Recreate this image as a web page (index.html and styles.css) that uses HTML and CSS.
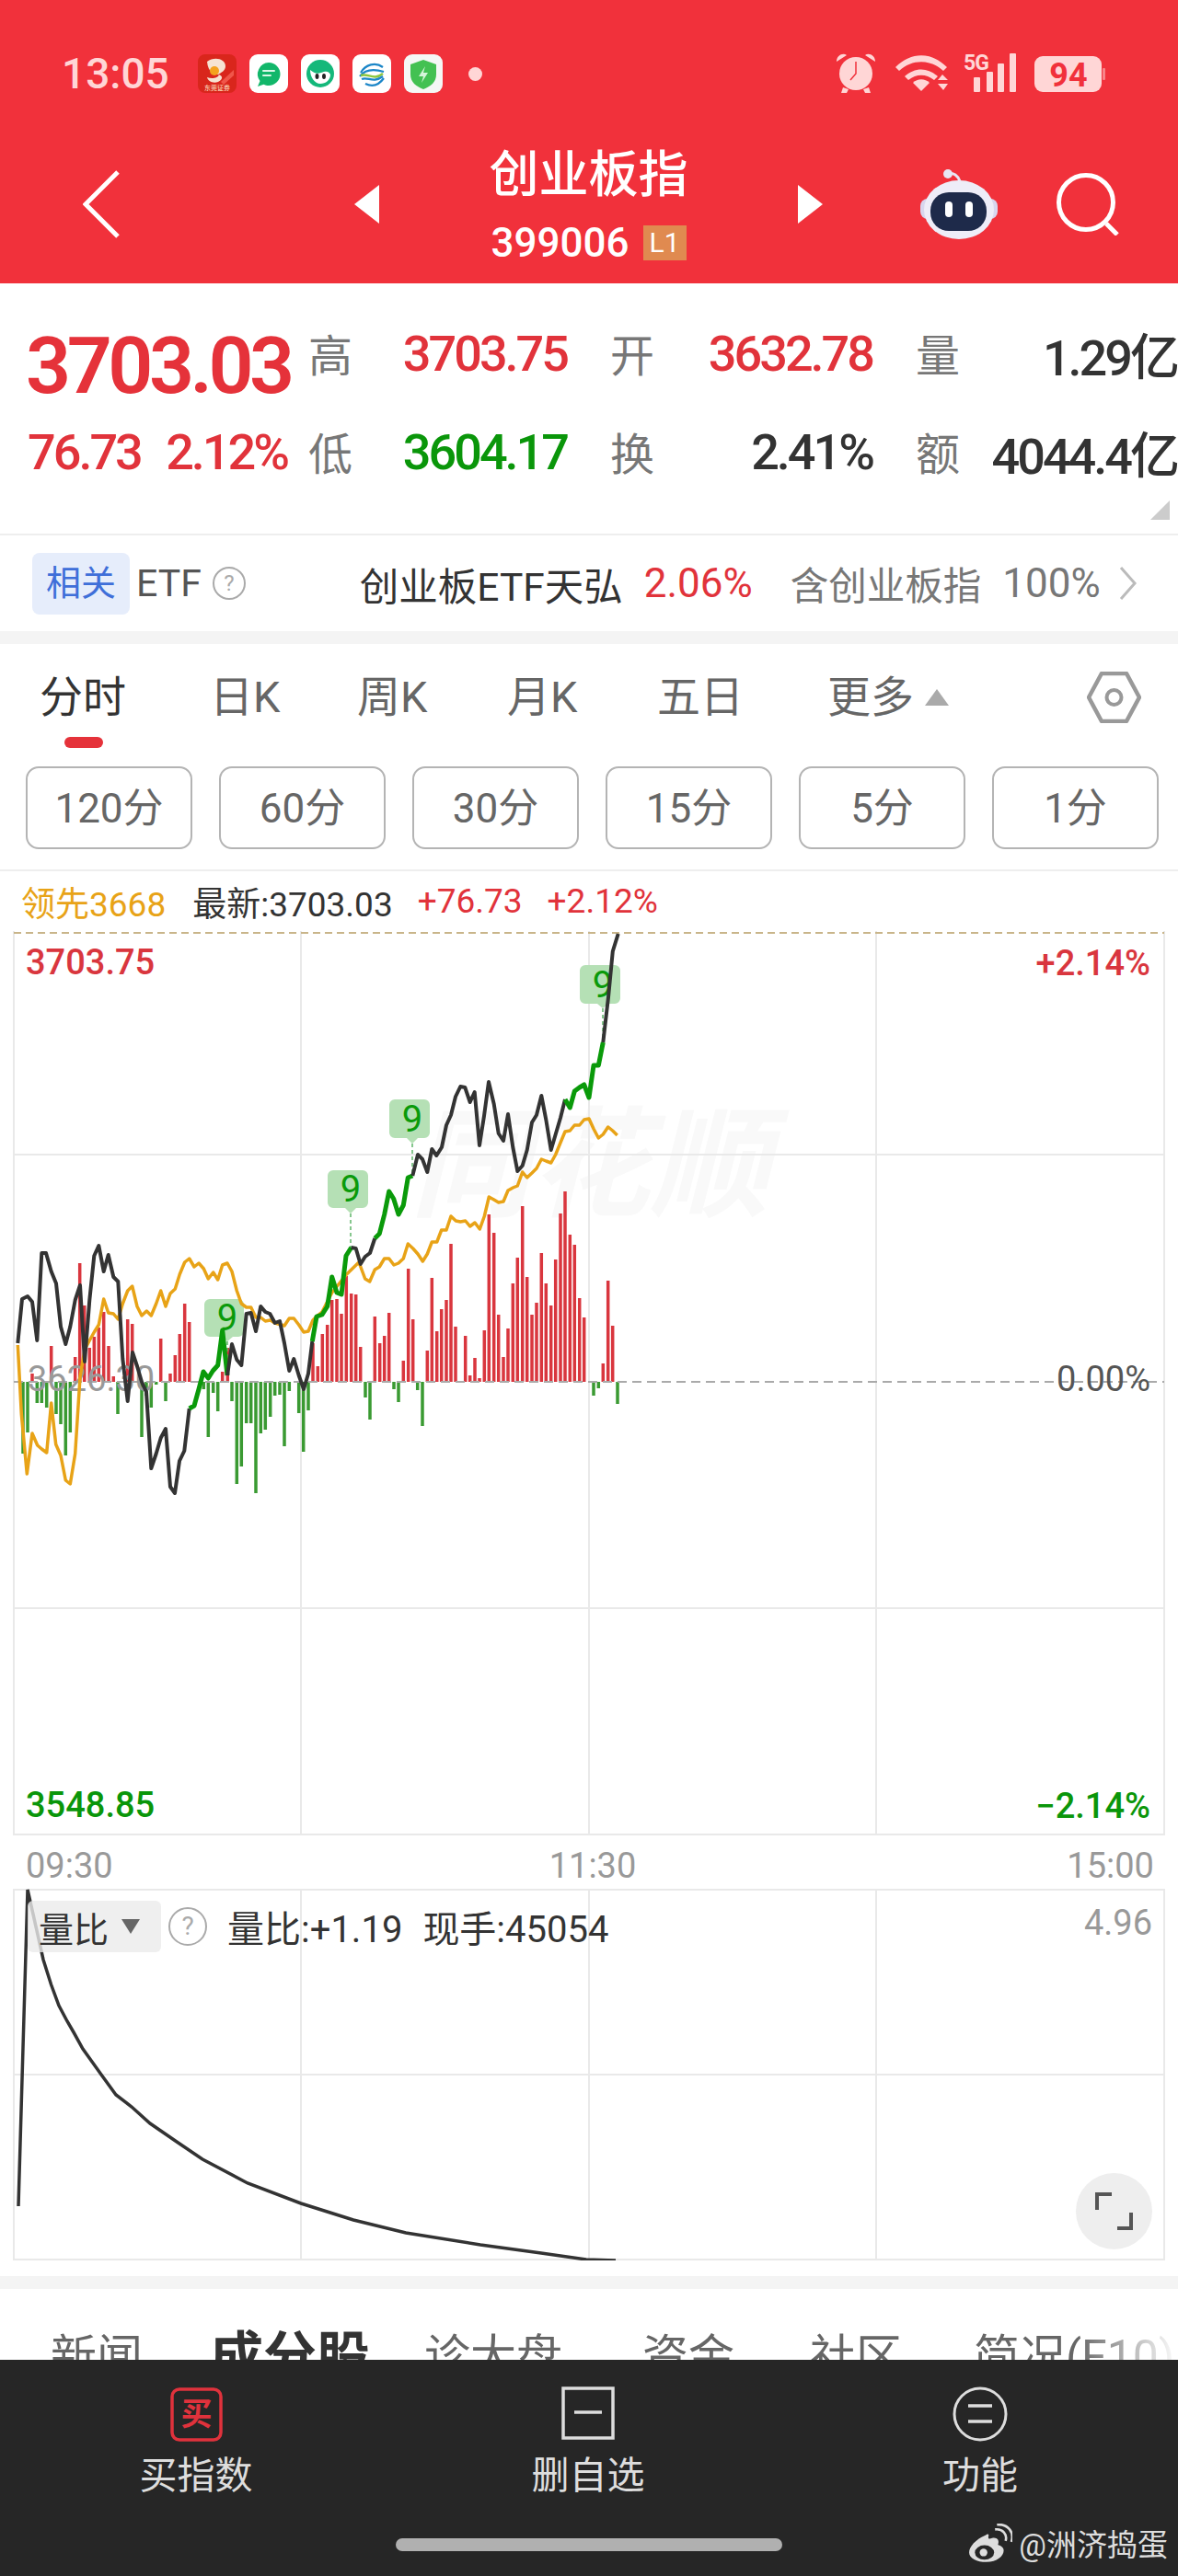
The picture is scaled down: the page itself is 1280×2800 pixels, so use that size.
FILE: index.html
```html
<!DOCTYPE html>
<html lang="zh-CN">
<head>
  <meta charset="UTF-8">
  <meta name="viewport" content="width=device-width, initial-scale=1.0">
  <title>创业板指 399006</title>
  <link rel="stylesheet" href="styles.css">
</head>
<body>
  <header class="top">
    <div class="status">
      <span class="clock">13:05</span>
      <div class="app-icons">
        <svg class="app-icon" viewBox="0 0 42 42"><rect width="42" height="42" rx="8" fill="#d9261c"/><path d="M10 8c8-6 20-3 20 5 0 5-5 7-8 9 6 1 5 6 0 8-6 2-11-1-12-5 5 2 12 1 13-3-5 0-12-2-13-14z" fill="#f6e3d2"/><circle cx="18" cy="18" r="5" fill="#f4a21e"/><path d="M25 30l14-13v6L28 33z" fill="#f0564a"/><text class="app-icon-text" x="21" y="39">东莞证券</text></svg>
        <svg class="app-icon" viewBox="0 0 42 42"><rect width="42" height="42" rx="9" fill="#fff"/><path d="M21 9a12.500 12.500 0 0 1 0 25c-2 0-4-.5-5.500-1.300L9 35l2.500-6A12.500 12.500 0 0 1 21 9z" fill="#12b76a"/><path d="M15 18h12M15 23h8" stroke="#d9f7e7" stroke-width="2" stroke-linecap="round"/></svg>
        <svg class="app-icon" viewBox="0 0 42 42"><rect width="42" height="42" rx="9" fill="#fff"/><circle cx="21" cy="21" r="15" fill="#14b87a"/><path d="M10 17c4 3 7 5 12 3s8-2 10 2c0 6-5 10-11 10-6 0-11-7-11-15z" fill="#fff"/><ellipse cx="17.500" cy="24" rx="2" ry="3" fill="#222"/><ellipse cx="25" cy="24" rx="2" ry="3" fill="#222"/></svg>
        <svg class="app-icon" viewBox="0 0 42 42"><rect width="42" height="42" rx="9" fill="#fff"/><path d="M9 20c5-9 16-12 24-6M8 24c6-8 16-8 26-5" fill="none" stroke="#1c86c8" stroke-width="2.200"/><path d="M9 23c8-3 14 6 24-2" fill="none" stroke="#8cc63f" stroke-width="2.500"/><path d="M10 27c7-3 12 5 23-3M14 32c8 4 15 1 20-6" fill="none" stroke="#1c86c8" stroke-width="2.200"/></svg>
        <svg class="app-icon" viewBox="0 0 42 42"><rect width="42" height="42" rx="9" fill="#f5f7f5"/><path d="M21 6l14 5v11c0 8-6 13-14 16-8-3-14-8-14-16V11z" fill="#43c152"/><path d="M23 13l-7 11h5l-2 7 7-11h-5z" fill="#d5f5d9"/></svg>
        <span class="status-dot"></span>
      </div>
      <svg class="status-right" viewBox="908 58 294 46">
        <g fill="#ffd6d6">
          <circle cx="930" cy="81" r="18"/>
          <path d="M909 68c0-7 7-10 11-7zM951 68c0-7-7-10-11-7z"/>
          <path d="M916 96l-2 6h6l2-4zM944 96l2 6h-6l-2-4z"/>
          <path d="M973 74c17-17 39-17 56 0l-4 4c-14-13-34-13-48 0z"/>
          <path d="M983 84c11-10 25-10 36 0l-4 4c-9-7-19-7-28 0z"/>
          <path d="M1001 100l-9-9c5-5 13-5 18 0z"/>
          <path d="M1019 88l5-6 6 6zM1019 92h11l-5 7z"/>
          <rect x="1058" y="85" width="7" height="16" rx="1"/>
          <rect x="1072" y="79" width="7" height="22" rx="1"/>
          <rect x="1084" y="70" width="7" height="31" rx="1"/>
          <rect x="1097" y="59" width="7" height="42" rx="1"/>
          <rect x="1124" y="62" width="73" height="39" rx="9"/>
          <rect x="1198" y="75" width="3" height="13" rx="1" opacity=".5"/>
        </g>
        <text class="status-5g" x="1047" y="77">5G</text>
        <text class="status-batt" x="1161" y="95">94</text>
        <path d="M930 68v13l-6 7" fill="none" stroke="#f1313b" stroke-width="1.500"/>
      </svg>
    </div>
    <nav class="nav">
      <svg class="nav-back" viewBox="0 0 40 74"><path d="M38 2L3 37l35 35" fill="none" stroke="#fff" stroke-width="5"/></svg>
      <span class="arrow arrow-left"></span>
      <div class="title">
        <div class="title-name">创业板指</div>
        <div class="title-code">399006<span class="badge-l1">L1</span></div>
      </div>
      <span class="arrow arrow-right"></span>
      <svg class="robot" viewBox="0 0 84 76">
        <path d="M30 5c6-2 11 2 13 8" fill="none" stroke="#e8e6f4" stroke-width="3"/>
        <circle cx="30" cy="5" r="5" fill="#e8e6f4"/>
        <rect x="0" y="32" width="84" height="22" rx="8" fill="#d8d6ee"/>
        <ellipse cx="42" cy="44" rx="38" ry="32" fill="#eeedf8"/>
        <rect x="11" y="25" width="61" height="42" rx="20" fill="#1e2a4a"/>
        <rect x="27" y="35" width="8" height="17" rx="4" fill="#fff"/>
        <rect x="49" y="35" width="8" height="17" rx="4" fill="#fff"/>
      </svg>
      <svg class="search" viewBox="0 0 68 68"><circle cx="32" cy="32" r="29.500" fill="none" stroke="#fff" stroke-width="5"/><path d="M54 55l12 12" stroke="#fff" stroke-width="5"/></svg>
    </nav>
  </header>

  <section class="quote">
    <div class="quote-row">
      <div class="quote-main"><span class="price">3703.03</span></div>
      <div class="q"><span class="lab">高</span><span class="num red">3703.75</span></div>
      <div class="q q-mid"><span class="lab">开</span><span class="num red">3632.78</span></div>
      <div class="q q-last"><span class="lab">量</span><span class="num">1.29亿</span></div>
    </div>
    <div class="quote-row quote-row-2">
      <div class="quote-main quote-change"><span class="num red">76.73</span><span class="num red">2.12%</span></div>
      <div class="q"><span class="lab">低</span><span class="num green">3604.17</span></div>
      <div class="q q-mid"><span class="lab">换</span><span class="num">2.41%</span></div>
      <div class="q q-last"><span class="lab">额</span><span class="num">4044.4亿</span></div>
    </div>
    <span class="corner"></span>
  </section>

  <section class="etf">
    <span class="etf-chip">相关</span>
    <span class="etf-word">ETF</span>
    <span class="help etf-help">?</span>
    <span class="etf-name">创业板ETF天弘</span>
    <span class="etf-pct">2.06%</span>
    <span class="etf-note">含创业板指</span>
    <span class="etf-weight">100%</span>
    <svg class="etf-more" viewBox="0 0 20 38"><path d="M2 2l15 17L2 36" fill="none" stroke="#bbb" stroke-width="3"/></svg>
  </section>

  <div class="band"></div>

  <section class="periods-tabs">
    <span class="tab active">分时</span>
    <span class="tab">日K</span>
    <span class="tab">周K</span>
    <span class="tab">月K</span>
    <span class="tab">五日</span>
    <span class="tab tab-more">更多<i class="up"></i></span>
    <svg class="gear" viewBox="1181 728 59 56"><path d="M1197 730h27l14 26-14 26h-27l-14-26z" fill="none" stroke="#999" stroke-width="4.500" stroke-linejoin="round"/><circle cx="1210.500" cy="756" r="8" fill="none" stroke="#999" stroke-width="4"/></svg>
  </section>

  <section class="periods">
    <span class="period">120分</span>
    <span class="period">60分</span>
    <span class="period">30分</span>
    <span class="period">15分</span>
    <span class="period">5分</span>
    <span class="period">1分</span>
  </section>

  <section class="legend">
    <span class="leg-lead">领先3668</span>
    <span class="leg-last">最新:3703.03</span>
    <span class="leg-up">+76.73</span>
    <span class="leg-up">+2.12%</span>
  </section>

  <!-- svg coordinates below are page coordinates, so the chart reads straight off the screenshot -->
  <svg class="chart" viewBox="0 1012 1280 983">
    <text class="wm" x="446" y="1312">同花顺</text>

    <path class="grid" d="M15 1012V1995M327 1012V1995M640 1012V1995M952 1012V1995M1265 1012V1995M15 1255H1265M15 1748H1265M15 1994H1265"/>
    <path class="grid-top" d="M15 1014H1265"/>

    <path class="bars-red" d="M35 1502V1493M55.700 1502V1463M81.700 1502V1475M86.700 1502V1373M91.700 1502V1419M97.300 1502V1465M102.300 1502V1453M107.300 1502V1443M112.700 1502V1426M118 1502V1463M123.300 1502V1496M138.700 1502V1434M143.700 1502V1439M174.700 1502V1455M185 1502V1493M190.300 1502V1473M195.300 1502V1450M200.700 1502V1417M205.700 1502V1437M241.700 1502V1491M247.300 1502V1465M340 1502V1460M345.300 1502V1485M350.300 1502V1450M355.700 1502V1440M360.700 1502V1413M366 1502V1412M371 1502V1428M376.300 1502V1387M381.700 1502V1406M386.700 1502V1407M391.700 1502V1464M407.300 1502V1431M412.700 1502V1460M417.700 1502V1452M422.700 1502V1427M438.300 1502V1479M443.700 1502V1379M448.700 1502V1434M464.300 1502V1468M469.300 1502V1389M474.700 1502V1447M479.700 1502V1423M485 1502V1413M490 1502V1352M495 1502V1442M505.700 1502V1452M510.700 1502V1495M516 1502V1476M521 1502V1498M526.300 1502V1446M531.300 1502V1320M536.700 1502V1340M541.700 1502V1429M547 1502V1475M552 1502V1444M557.300 1502V1395M562.300 1502V1367M567.700 1502V1311M572.700 1502V1388M578 1502V1429M583 1502V1416M588.300 1502V1362M593.300 1502V1395M598.700 1502V1419M603.700 1502V1369M609 1502V1319M614 1502V1295M619.300 1502V1342M624.300 1502V1353M629.700 1502V1411M634.700 1502V1432M655.300 1502V1482M660.700 1502V1392M665.700 1502V1441"/>
    <path class="bars-green" d="M25 1502V1580M30 1502V1557M40.300 1502V1525M45.300 1502V1525M50.700 1502V1530M61 1502V1537M66 1502V1548M71.300 1502V1582M76.300 1502V1557M128 1502V1537M154 1502V1562M159 1502V1517M164.300 1502V1530M169.700 1502V1505M180 1502V1523M221.300 1502V1510M226.300 1502V1562M231.700 1502V1514M236.700 1502V1534M252 1502V1523M257.300 1502V1613M262.300 1502V1594M267.700 1502V1547M272.700 1502V1547M278 1502V1623M283.300 1502V1558M288.300 1502V1554M293.700 1502V1540M298.700 1502V1517M304 1502V1516M309 1502V1572M314.300 1502V1512M324.700 1502V1536M329.700 1502V1578M335 1502V1533M397 1502V1519M402 1502V1543M428 1502V1510M433 1502V1524M453.700 1502V1511M459 1502V1550M645 1502V1517M650.300 1502V1509M671 1502V1526"/>
    <path class="zero" d="M15 1502H1265"/>

    <path class="badge" d="M234 1412h25a6 6 0 0 1 6 6v29a6 6 0 0 1-6 6h-6l-6 5-6-5h-13a6 6 0 0 1-6-6v-29a6 6 0 0 1 6-6z"/>
    <path class="badge" d="M368 1272h26a6 6 0 0 1 6 6v29a6 6 0 0 1-6 6h-7l-6 6-6-6h-13a6 6 0 0 1-6-6v-29a6 6 0 0 1 6-6z"/>
    <path class="badge" d="M435 1195h26a6 6 0 0 1 6 6v30a6 6 0 0 1-6 6h-7l-6 6-6-6h-13a6 6 0 0 1-6-6v-30a6 6 0 0 1 6-6z"/>
    <path class="badge" d="M642 1049h26a6 6 0 0 1 6 6v30a6 6 0 0 1-6 6h-7l-6 5-6-5h-13a6 6 0 0 1-6-6v-30a6 6 0 0 1 6-6z"/>
    <path class="badge-drop" d="M247 1458V1495M381 1319V1356M448 1243V1278M655 1096V1133"/>
    <text class="badge-num" x="247" y="1446">9</text>
    <text class="badge-num" x="381" y="1306">9</text>
    <text class="badge-num" x="448" y="1230">9</text>
    <text class="badge-num" x="655" y="1084">9</text>

    <text class="label-mid" x="30" y="1512">3626.30</text>

    <polyline class="avg" points="19.300,1462 23.300,1537 29.300,1602 35,1558 40.700,1571 45.300,1575 50.700,1579 55.700,1525 60.700,1570 66,1582 71.300,1609 76.300,1613 81.700,1580 87,1497 92,1467 97.300,1457 102.300,1448 107.300,1440 112.700,1412 117.700,1427 123.300,1428 128.300,1434 133.300,1417 138.700,1403 143.700,1398 149,1420 154,1430 159.300,1425 164.300,1430 169.700,1417 174.700,1403 180,1420 185,1406 190.300,1401 195.300,1385 200.700,1372 205.700,1368 211,1377 216,1373 221.300,1379 226.300,1390 231.700,1383 236.700,1391 241.700,1375 247,1373 252,1382 257.300,1403 262.300,1417 267.700,1421 272.700,1421 278,1432 283.300,1432 288.300,1436 293.700,1435 298.700,1438 309,1441 314.300,1433 319.300,1433 324.700,1440 330,1448 335,1447 340,1435 345,1430 350,1426 360.700,1405 376.700,1385 390,1372 396.700,1390 401.700,1393 407.300,1380 412.300,1377 417.700,1368 422.700,1368 428,1375 433,1373 438.300,1368 443.300,1352 448.700,1357 454,1363 459.300,1371 464.300,1363 469.300,1350 474.700,1350 479.700,1337 485,1337 490,1322 495.300,1327 500.300,1328 505.700,1327 510.700,1333 516,1329 521.300,1336 526.300,1322 531.300,1301 536.700,1304 541.700,1307 547,1306 552,1294 557.300,1291 562.300,1289 567.700,1274 572.700,1280 578,1275 583,1270 588.300,1260 593.300,1262 598.700,1264 603.700,1255 609,1242 614,1230 619.300,1229 624.300,1223 629.700,1223 634.700,1217 640,1216 645,1227 650.300,1237 655.300,1233 660.700,1225 665.700,1229 670.700,1234"/>

    <polyline class="line" points="19.300,1460 24,1412 30,1409 35,1415 40.300,1457 45.300,1362 50,1362 55.700,1382 61,1395 66,1442 71.300,1461 76.300,1442 81.700,1413 87,1397 92,1480 97.300,1413 102.300,1365 107.300,1354 112.700,1382 117.700,1364 123.300,1388 128.300,1393 133.300,1477 138.700,1523 144,1470 149,1485 154,1502 159,1513 164.300,1596 169.700,1580 174.700,1563 180,1553 185,1616 190,1623 195,1588 200.300,1577 205.700,1531"/>
    <polyline class="line-up" points="205.700,1531 211,1528 216,1510 221,1491 226.300,1498 231.300,1490 236.700,1484 241.700,1446 247,1495"/>
    <polyline class="line" points="247,1495 252,1461 257.300,1478 262.300,1484 267.700,1428 272.700,1427 278,1447 283.300,1420 288.300,1426 293.300,1428 298.700,1438 304,1436 309,1460 314.300,1490 319.300,1477 324.700,1495 330,1510 335,1493 339.300,1458"/>
    <polyline class="line-up" points="339.300,1458 344,1431 350,1429 355.700,1420 360.700,1388 366,1405 371,1407 376,1365 381.700,1356"/>
    <polyline class="line" points="381.700,1356 386.700,1357 391.700,1374 396.700,1366 402,1362 407.300,1346"/>
    <polyline class="line-up" points="407.300,1346 412.300,1341 417.700,1320 422.700,1295 427.700,1303 433,1320 438.300,1310 443.300,1280 448.300,1278"/>
    <polyline class="line" points="448.300,1278 454,1255 459,1260 464.300,1274 469.300,1249 474.300,1256 480,1247 485,1223 490,1212 495,1192 500.300,1181 505.300,1182 510.700,1198 515.700,1187 521,1245 526,1213 531,1176 536.700,1200 541.700,1232 547,1240 552,1211 557.300,1247 562.300,1273 567.700,1267 572.700,1250 578,1220 583,1212 588.300,1191 593.300,1217 598.700,1250 603.700,1233 609,1215 614,1195"/>
    <polyline class="line-up" points="614,1195 619.300,1204 624.300,1186 629.700,1182 634.700,1179 640,1193 645,1158 650.300,1158 655.300,1133"/>
    <polyline class="line" points="655.300,1133 657.500,1114 661,1084 665.800,1034 671.700,1015"/>

    <text class="label red-text" x="28" y="1059">3703.75</text>
    <text class="label red-text end" x="1250" y="1060">+2.14%</text>
    <text class="label pale end" x="1250" y="1512">0.00%</text>
    <text class="label green-text" x="28" y="1975">3548.85</text>
    <text class="label green-text end" x="1250" y="1976">−2.14%</text>
  </svg>

  <div class="times">
    <span>09:30</span>
    <span class="time-mid">11:30</span>
    <span>15:00</span>
  </div>

  <section class="sub">
    <svg class="sub-chart" viewBox="0 2053 1280 404">
      <path class="grid" d="M15 2053V2457M327 2053V2457M640 2053V2457M952 2053V2457M1265 2053V2457M15 2054H1265M15 2255H1265M15 2456H1265"/>
      <polyline class="ratio" points="20,2398 30,2054 41,2103 47,2130 55.500,2157 64,2180 73,2197 80,2209 90,2227 100,2241 110,2255 126,2277 143,2290 163,2308 192,2328 220,2347 269,2373 327,2395 384,2413 441,2427 522,2440 588,2449 637,2456 669,2457"/>
      <text class="sub-max" x="1252" y="2103">4.96</text>
    </svg>
    <div class="sub-legend">
      <span class="sub-chip">量比<i class="down"></i></span>
      <span class="help sub-help">?</span>
      <span class="sub-text">量比:+1.19</span>
      <span class="sub-text">现手:45054</span>
    </div>
    <button class="expand">
      <svg viewBox="0 0 83 83"><path d="M23 40V23H39M60 43V60H45" fill="none" stroke="#555" stroke-width="4"/></svg>
    </button>
  </section>

  <div class="gap-white"></div>
  <div class="band"></div>

  <section class="news">
    <span class="news-tab">新闻</span>
    <span class="news-tab news-active">成分股</span>
    <span class="news-tab">诊大盘</span>
    <span class="news-tab">资金</span>
    <span class="news-tab">社区</span>
    <span class="news-tab">简况(F10)</span>
  </section>

  <footer class="bar">
    <div class="bar-items">
      <div class="bar-item">
        <svg viewBox="0 0 60 60"><rect x="4" y="3" width="53" height="55" rx="8" fill="none" stroke="#e0323c" stroke-width="3.500"/><text class="buy-mark" x="30.500" y="42">买</text></svg>
        <span>买指数</span>
      </div>
      <div class="bar-item">
        <svg viewBox="0 0 60 60"><rect x="3" y="2" width="54" height="54" fill="none" stroke="#ddd" stroke-width="3.500"/><path d="M15 28h30" stroke="#ddd" stroke-width="3.500"/></svg>
        <span>删自选</span>
      </div>
      <div class="bar-item">
        <svg viewBox="0 0 60 60"><circle cx="30" cy="30" r="28" fill="none" stroke="#ddd" stroke-width="3"/><path d="M17 21h26M17 38h26" stroke="#ddd" stroke-width="3.500"/></svg>
        <span>功能</span>
      </div>
    </div>
    <div class="home"></div>
    <div class="weibo">
      <svg viewBox="0 0 46 40"><path d="M18 12C8 16 1 24 1 30c0 6 8 10 18 10 11 0 18-6 18-12 0-4-4-5-6-6 2-5-1-8-6-7-3 1-4 1-4-1 1-3 0-4-3-2z" fill="#ddd"/><ellipse cx="17" cy="30" rx="10" ry="7.500" fill="#262626"/><circle cx="16" cy="30" r="4" fill="#ddd"/><path d="M28 6c8-1 13 5 11 12M30 1c12-1 18 8 15 18" fill="none" stroke="#ddd" stroke-width="2.500"/></svg>
      <span>@洲济捣蛋</span>
    </div>
  </footer>
</body>
</html>
```

FILE: styles.css
```css
body {
  margin: 0;
  width: 1280px;
  height: 2800px;
  overflow: hidden;
  background-color: #fff;
  color: #333;
  font-family: Roboto, "Noto Sans CJK SC", sans-serif;
}
svg {
  display: block;
}

/* red header */
.top {
  height: 308px;
  background-color: #f1313b;
  color: #fff;
}
.status {
  display: flex;
  align-items: center;
  height: 160px;
  padding: 0 78px 0 67px;
  box-sizing: border-box;
}
.clock {
  width: 148px;
  font-size: 46px;
  font-weight: 500;
  color: #ffd6d6;
}
.app-icons {
  display: flex;
  align-items: center;
  gap: 14px;
}
.app-icon {
  width: 42px;
  height: 42px;
}
.app-icon-text {
  font-size: 7px;
  fill: #ffe9c8;
  text-anchor: middle;
}
.status-dot {
  width: 15px;
  height: 15px;
  margin-left: 14px;
  border-radius: 50%;
  background-color: #ffd6d6;
}
.status-right {
  width: 294px;
  height: 46px;
  margin-left: auto;
}
.status-5g {
  font-size: 23px;
  font-weight: 700;
  fill: #ffd6d6;
  letter-spacing: -1px;
}
.status-batt {
  font-size: 36px;
  font-weight: 700;
  fill: #f1313b;
  text-anchor: middle;
}
.nav {
  display: flex;
  align-items: center;
  height: 148px;
  padding: 0 0 24px 90px;
  box-sizing: border-box;
}
.nav-back {
  width: 40px;
  height: 74px;
}
.arrow {
  width: 0;
  height: 0;
  border-top: 21px solid transparent;
  border-bottom: 21px solid transparent;
}
.arrow-left {
  margin-left: 255px;
  border-right: 27px solid #fff;
}
.arrow-right {
  border-left: 27px solid #fff;
}
.title {
  display: flex;
  flex-direction: column;
  align-items: center;
  width: 455px;
}
.title-name {
  font-size: 54px;
  font-weight: 500;
  line-height: 66px;
}
.title-code {
  display: flex;
  align-items: center;
  margin-top: 17px;
  font-size: 44px;
  font-weight: 500;
  line-height: 46px;
}
.badge-l1 {
  width: 47px;
  height: 38px;
  margin-left: 15px;
  background-color: #e08a50;
  font-size: 30px;
  font-weight: 400;
  line-height: 38px;
  text-align: center;
}
.robot {
  width: 84px;
  height: 76px;
  margin-left: 106px;
}
.search {
  width: 68px;
  height: 68px;
  margin-left: 64px;
}

/* quote numbers */
.quote {
  position: relative;
  height: 272px;
  padding: 46px 0 0 28px;
  box-sizing: border-box;
}
.quote-row {
  display: flex;
  align-items: center;
  gap: 47px;
  height: 60px;
}
.quote-row-2 {
  margin-top: 47px;
}
.quote-main {
  width: 284px;
  margin-right: -24px;
}
.price {
  position: relative;
  top: 15px;
  font-size: 86px;
  line-height: 60px;
  font-weight: 600;
  letter-spacing: -4.5px;
  color: #e5323a;
}
.quote-change {
  display: flex;
  justify-content: space-between;
  padding-left: 2px;
  box-sizing: border-box;
}
.q {
  display: flex;
  justify-content: space-between;
  align-items: center;
  width: 281px;
}
.q-mid {
  width: 285px;
}
.q-last {
  width: 284px;
}
.lab {
  margin-bottom: 3px;
  font-size: 48px;
  color: #777;
}
.num {
  font-size: 54px;
  font-weight: 500;
  letter-spacing: -3px;
  color: #333;
}
.num.red {
  color: #e1333b;
}
.num.green {
  color: #0a960a;
}
.corner {
  position: absolute;
  right: 9px;
  bottom: 15px;
  width: 21px;
  height: 21px;
  background-color: #ccc;
  clip-path: polygon(100% 0, 100% 100%, 0 100%);
}

/* related etf */
.etf {
  display: flex;
  align-items: center;
  height: 106px;
  padding-left: 35px;
  border-top: 2px solid #eee;
  box-sizing: border-box;
}
.etf-chip {
  width: 106px;
  height: 67px;
  border-radius: 8px;
  background-color: #e6edfb;
  color: #3f6fd9;
  font-size: 38px;
  line-height: 67px;
  text-align: center;
}
.etf-word {
  margin-left: 7px;
  font-size: 41px;
  color: #555;
}
.help {
  display: inline-block;
  box-sizing: border-box;
  border: 2px solid #aaa;
  border-radius: 50%;
  color: #aaa;
  text-align: center;
}
.etf-help {
  width: 36px;
  height: 36px;
  margin-left: 12px;
  font-size: 24px;
  line-height: 32px;
}
.etf-name {
  margin-left: 124px;
  font-size: 42.5px;
  color: #333;
}
.etf-pct {
  margin-left: 23px;
  font-size: 44px;
  color: #e1333b;
}
.etf-note {
  margin-left: 41px;
  font-size: 41.5px;
  color: #777;
}
.etf-weight {
  margin-left: 23px;
  font-size: 44px;
  color: #777;
}
.etf-more {
  width: 20px;
  height: 38px;
  margin-left: 20px;
}
.band {
  height: 14px;
  background-color: #f4f4f4;
}

/* period tabs */
.periods-tabs {
  display: grid;
  grid-template-columns: 185px 160px 163px 163px 185px 282px 59px;
  align-items: center;
  height: 133px;
  padding: 0 0 18px 43px;
  box-sizing: border-box;
}
.tab {
  position: relative;
  font-size: 47px;
  line-height: 54px;
  color: #666;
}
.tab.active {
  color: #333;
}
.tab.active::after {
  content: "";
  position: absolute;
  left: 27px;
  top: 70px;
  width: 42px;
  height: 12px;
  border-radius: 6px;
  background-color: #e5323a;
}
.tab-more {
  display: flex;
  align-items: center;
}
.up {
  width: 0;
  height: 0;
  margin-left: 12px;
  border-left: 13px solid transparent;
  border-right: 13px solid transparent;
  border-bottom: 18px solid #aaa;
}
.gear {
  width: 59px;
  height: 56px;
}
.periods {
  display: grid;
  grid-template-columns: repeat(6, 181px);
  gap: 29px;
  height: 90px;
  padding-left: 28px;
}
.period {
  height: 90px;
  border: 2px solid #b4b4b4;
  border-radius: 14px;
  box-sizing: border-box;
  color: #666;
  font-size: 44px;
  line-height: 88px;
  text-align: center;
}
.legend {
  display: flex;
  align-items: center;
  height: 67px;
  margin-top: 22px;
  padding-left: 23px;
  border-top: 2px solid #eee;
  box-sizing: border-box;
  font-size: 37px;
}
.leg-lead {
  color: #e8a317;
}
.leg-last {
  margin-left: 29px;
  color: #333;
}
.leg-up {
  margin-left: 27px;
  color: #e1333b;
}

/* main chart */
.chart {
  width: 1280px;
  height: 983px;
}
.wm {
  font-size: 130px;
  font-weight: 700;
  font-style: italic;
  fill: #f9f9f9;
}
.grid {
  fill: none;
  stroke: #e9e9e9;
  stroke-width: 2;
}
.grid-top {
  fill: none;
  stroke: #c9b58a;
  stroke-width: 2;
  stroke-dasharray: 8 5;
}
.zero {
  fill: none;
  stroke: #aaa;
  stroke-width: 2;
  stroke-dasharray: 10 6;
}
.bars-red {
  fill: none;
  stroke: #d9363e;
  stroke-width: 3.5;
}
.bars-green {
  fill: none;
  stroke: #3a9a32;
  stroke-width: 3.5;
}
.badge {
  fill: #b5e0b5;
}
.badge-drop {
  fill: none;
  stroke: #5fb56a;
  stroke-width: 1.5;
  stroke-dasharray: 4 3;
}
.badge-num {
  font-size: 40px;
  fill: #0a9a0a;
  text-anchor: middle;
}
.avg {
  fill: none;
  stroke: #e8a317;
  stroke-width: 3.5;
  stroke-linejoin: round;
}
.line {
  fill: none;
  stroke: #333;
  stroke-width: 4;
  stroke-linejoin: round;
}
.line-up {
  fill: none;
  stroke: #0a9a0a;
  stroke-width: 5;
  stroke-linejoin: round;
}
.label {
  font-size: 38px;
  font-weight: 500;
}
.label-mid {
  font-size: 38px;
  fill: #999;
}
.red-text {
  fill: #d9363e;
}
.green-text {
  fill: #0a960a;
}
.pale {
  fill: #555;
  font-weight: 400;
}
.end {
  text-anchor: end;
}

.times {
  display: flex;
  justify-content: space-between;
  height: 58px;
  padding: 0 26px 0 28px;
  color: #999;
  font-size: 38px;
  line-height: 66px;
}
.time-mid {
  margin-left: 6px;
}

/* ratio chart */
.sub {
  position: relative;
  height: 404px;
}
.sub-chart {
  width: 1280px;
  height: 404px;
}
.ratio {
  fill: none;
  stroke: #333;
  stroke-width: 3.5;
}
.sub-max {
  font-size: 38px;
  fill: #999;
  text-anchor: end;
}
.sub-legend {
  position: absolute;
  left: 30px;
  top: 13px;
  display: flex;
  align-items: center;
  height: 56px;
}
.sub-chip {
  display: flex;
  align-items: center;
  box-sizing: border-box;
  width: 145px;
  height: 56px;
  padding-left: 12px;
  border-radius: 6px;
  background-color: rgba(235, 235, 235, 0.8);
  font-size: 38px;
}
.down {
  width: 0;
  height: 0;
  margin-left: 14px;
  border-left: 10px solid transparent;
  border-right: 10px solid transparent;
  border-top: 16px solid #666;
}
.sub-help {
  width: 42px;
  height: 42px;
  margin: 0 22px 0 8px;
  font-size: 28px;
  line-height: 38px;
}
.sub-text {
  margin-right: 22px;
  font-size: 40px;
}
.expand {
  position: absolute;
  right: 28px;
  bottom: 12px;
  width: 83px;
  height: 83px;
  padding: 0;
  border: none;
  border-radius: 50%;
  background-color: #eee;
}
.gap-white {
  height: 17px;
}

/* lower tabs, cut off by the bar */
.news {
  position: relative;
  display: grid;
  grid-template-columns: 173px 233px 237px 182px 178px 240px;
  height: 77px;
  padding: 44px 0 0 55px;
  box-sizing: border-box;
  overflow: hidden;
}
.news::after {
  content: "";
  position: absolute;
  top: 0;
  right: 0;
  bottom: 0;
  width: 110px;
  background: linear-gradient(to right, rgba(255, 255, 255, 0), #fff);
}
.news-tab {
  font-size: 50px;
  line-height: 60px;
  color: #666;
  white-space: nowrap;
}
.news-active {
  font-size: 58px;
  font-weight: 700;
  color: #333;
}

/* bottom bar */
.bar {
  position: relative;
  height: 235px;
  background-color: #262626;
  color: #ddd;
}
.bar-items {
  display: grid;
  grid-template-columns: repeat(3, 426px);
  height: 194px;
}
.bar-item {
  display: flex;
  flex-direction: column;
  align-items: center;
  padding-top: 29px;
  font-size: 41px;
  line-height: 58px;
}
.bar-item svg {
  width: 60px;
  height: 60px;
  margin-bottom: 8px;
}
.buy-mark {
  font-size: 34px;
  font-weight: 700;
  fill: #e0323c;
  text-anchor: middle;
}
.home {
  width: 420px;
  height: 14px;
  margin-left: 430px;
  border-radius: 7px;
  background-color: #b0b0b0;
}
.weibo {
  position: absolute;
  right: 11px;
  bottom: 12px;
  display: flex;
  align-items: center;
  gap: 7px;
  font-size: 33px;
}
.weibo svg {
  width: 48px;
  height: 42px;
}
```
